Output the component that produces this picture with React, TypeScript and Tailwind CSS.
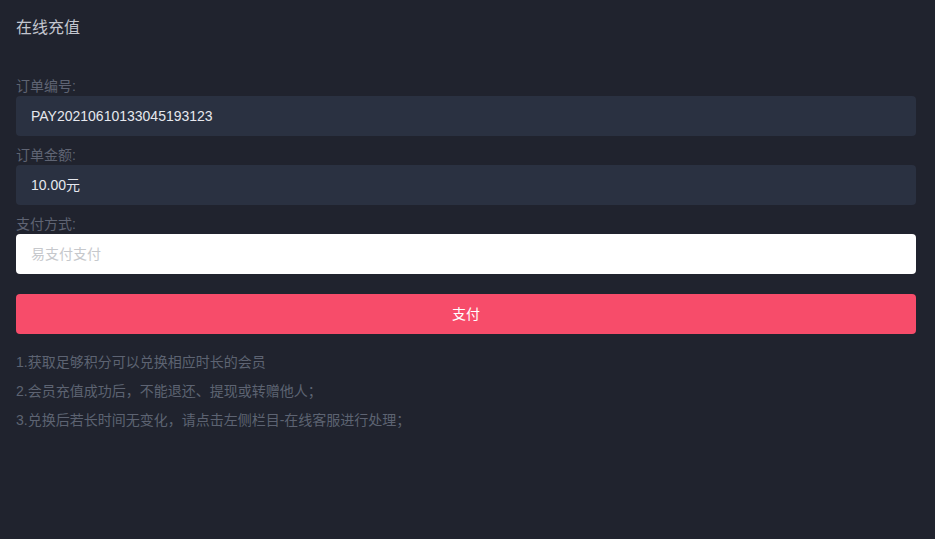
import React from "react";

const font = { fontFamily: '"Liberation Sans", "Noto Sans CJK SC", sans-serif' };

function Field({ label, children }: { label: string; children: React.ReactNode }) {
  return (
    <div>
      <div className="text-[14px] leading-[19px] text-[#5f6473]">{label}</div>
      {children}
    </div>
  );
}

export default function App() {
  return (
    <div className="min-h-[539px] w-full bg-[#20232e] pl-4 pr-[19px]" style={font}>
      <div className="pt-[17px] text-[16px] leading-[22px] text-[#c3c6ce]">在线充值</div>
      <div className="mt-[38px] flex flex-col gap-[10px]">
        <Field label="订单编号:">
          <div className="flex h-10 items-center rounded bg-[#2a3141] px-[15px] text-[14px] text-[#e6e8ee]">
            PAY20210610133045193123
          </div>
        </Field>
        <Field label="订单金额:">
          <div className="flex h-10 items-center rounded bg-[#2a3141] px-[15px] text-[14px] text-[#e6e8ee]">
            10.00元
          </div>
        </Field>
        <Field label="支付方式:">
          <div className="flex h-10 items-center rounded bg-white px-[15px] text-[14px] text-[#c6c8cc]">
            易支付支付
          </div>
        </Field>
      </div>
      <button className="mt-5 flex h-10 w-full items-center justify-center rounded bg-[#f74c6a] text-[14px] text-white">
        支付
      </button>
      <div className="mt-[14px] text-[14px] leading-[29px] text-[#5d6372]">
        <p>1.获取足够积分可以兑换相应时长的会员</p>
        <p>2.会员充值成功后，不能退还、提现或转赠他人；</p>
        <p>3.兑换后若长时间无变化，请点击左侧栏目-在线客服进行处理；</p>
      </div>
    </div>
  );
}
